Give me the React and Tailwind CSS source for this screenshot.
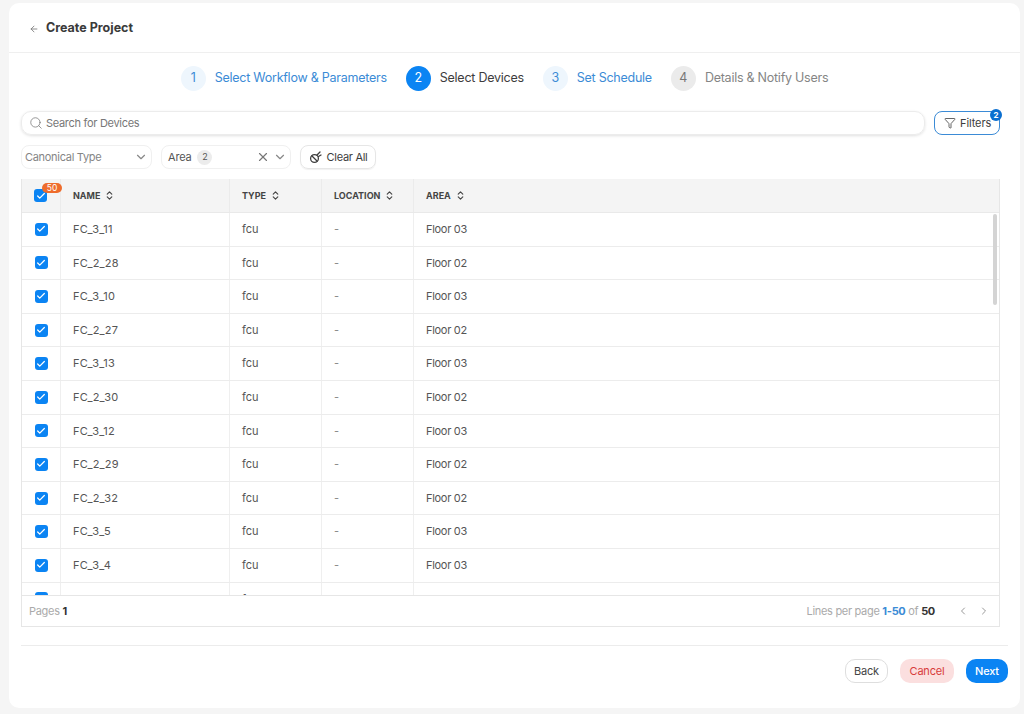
import React from 'react';
import { ArrowLeft, Search, ChevronDown, ChevronLeft, ChevronRight, X, Check, ChevronsUpDown, Funnel } from 'lucide-react';

const devices = [
  ['FC_3_11', 'Floor 03'],
  ['FC_2_28', 'Floor 02'],
  ['FC_3_10', 'Floor 03'],
  ['FC_2_27', 'Floor 02'],
  ['FC_3_13', 'Floor 03'],
  ['FC_2_30', 'Floor 02'],
  ['FC_3_12', 'Floor 03'],
  ['FC_2_29', 'Floor 02'],
  ['FC_2_32', 'Floor 02'],
  ['FC_3_5', 'Floor 03'],
  ['FC_3_4', 'Floor 03'],
  ['FC_2_31', 'Floor 02'],
];

const steps = [
  { n: 1, label: 'Select Workflow & Parameters', state: 'done' },
  { n: 2, label: 'Select Devices', state: 'active' },
  { n: 3, label: 'Set Schedule', state: 'done' },
  { n: 4, label: 'Details & Notify Users', state: 'todo' },
];

const Step = ({ step }) => {
  const circle = step.state === 'active' ? 'bg-[#0b84f3] text-white' : step.state === 'done' ? 'bg-[#eef6fd] text-[#3b8bd6]' : 'bg-[#ebebeb] text-[#777]';
  const text = step.state === 'active' ? 'text-[#3d3d3d]' : step.state === 'done' ? 'text-[#3b8bd6]' : 'text-[#858585]';
  return (
    <div className="flex items-center gap-[9px]">
      <div className={`w-[25px] h-[25px] rounded-full flex items-center justify-center text-[12.5px] ${circle}`}>{step.n}</div>
      <span className={`text-[12.5px] tracking-[-0.25px] whitespace-nowrap ${text}`}>{step.label}</span>
    </div>
  );
};

const Checkbox = () => (
  <div className="w-[13px] h-[13px] rounded-[3px] bg-[#0b84f3] flex items-center justify-center">
    <Check size={10} strokeWidth={3} className="text-white" />
  </div>
);

const HeadCell = ({ label }) => (
  <div className="flex items-center gap-[4px] pl-[12px] border-l border-[#ebebeb] h-full">
    <span className="text-[9px] font-bold text-[#444]">{label}</span>
    <ChevronsUpDown size={11} strokeWidth={2.5} className="text-[#444]" />
  </div>
);

const BroomIcon = () => (
  <svg width="13" height="13" viewBox="0 0 13 13" fill="none" stroke="#3d3d3d" strokeWidth="1.3" strokeLinecap="round">
    <circle cx="5.5" cy="7.5" r="3.9" />
    <path d="M3 5l5 5" />
    <path d="M8 4l3-3M9.5 5.5L12 4" />
  </svg>
);

export default function App() {
  return (
    <div className="w-[1024px] h-[714px] bg-[#f5f5f5] pt-[3px] pl-[9px] pr-[4px] pb-[6px] overflow-hidden font-['Inter',sans-serif]">
      <div className="h-full bg-white rounded-[10px] flex flex-col">
        <div className="h-[50px] flex items-center gap-[7px] pl-[20px] pt-[2px] border-b border-[#efefef] shrink-0">
          <ArrowLeft size={10} className="text-[#777]" />
          <span className="text-[12.5px] font-bold text-[#3a3a3a]">Create Project</span>
        </div>

        <div className="flex justify-center gap-[19px] pt-[13px] pr-[20px] shrink-0">
          {steps.map((s) => <Step key={s.n} step={s} />)}
        </div>

        <div className="flex gap-[9px] mt-[20px] pl-[12px] pr-[20px] shrink-0">
          <div className="flex-1 h-[24px] rounded-[10px] border border-[#ececec] shadow-[0_1px_3px_rgba(0,0,0,0.12)] flex items-center gap-[3px] pl-[7px]">
            <Search size={14} strokeWidth={1.3} className="text-[#777]" />
            <span className="text-[11px] tracking-[-0.3px] text-[#777]">Search for Devices</span>
          </div>
          <div className="relative w-[66px] h-[24px] rounded-[8px] border border-[#3b8bd6] flex items-center gap-[4px] pl-[9px]">
            <Funnel size={12} strokeWidth={1.6} className="text-[#3d3d3d]" />
            <span className="text-[11px] text-[#3d3d3d] tracking-[-0.1px]">Filters</span>
            <div className="absolute -top-[3px] -right-[3px] w-[12px] h-[12px] rounded-full bg-[#0b6fd0] text-white text-[8px] font-bold flex items-center justify-center">2</div>
          </div>
        </div>

        <div className="flex gap-[9px] mt-[10px] pl-[12px] shrink-0">
          <div className="w-[131px] h-[24px] rounded-[8px] border border-[#f0f0f0] flex items-center justify-between pl-[3px] pr-[3px]">
            <span className="text-[11px] tracking-[-0.3px] text-[#858585]">Canonical Type</span>
            <ChevronDown size={14} className="text-[#888]" />
          </div>
          <div className="w-[130px] h-[24px] rounded-[8px] border border-[#f0f0f0] flex items-center pl-[6px] pr-[3px]">
            <span className="text-[11px] tracking-[-0.2px] text-[#555]">Area</span>
            <span className="ml-[6px] w-[15px] h-[15px] rounded-full bg-[#ececec] text-[9px] text-[#555] flex items-center justify-center">2</span>
            <X size={14} className="ml-auto text-[#777]" />
            <ChevronDown size={14} className="ml-[3px] text-[#888]" />
          </div>
          <div className="w-[76px] h-[24px] rounded-[8px] border border-[#e6e6e6] shadow-[0_1px_1px_rgba(0,0,0,0.06)] flex items-center justify-center gap-[5px]">
            <BroomIcon />
            <span className="text-[11px] tracking-[-0.3px] text-[#3d3d3d]">Clear All</span>
          </div>
        </div>

        <div className="relative mt-[10px] ml-[12px] mr-[20px] border-x border-b border-[#e6e6e6] shrink-0">
          <div className="grid grid-cols-[38px_169px_92px_92px_1fr] h-[34px] bg-[#f4f4f4] items-center border-b border-[#e9e9e9]">
            <div className="relative flex items-center justify-center h-full -ml-[1px]">
              <Checkbox />
              <span className="absolute top-[4px] left-[21px] w-[20px] h-[10px] rounded-full bg-[#ee6c2c] text-white text-[8.5px] leading-[10px] text-center">50</span>
            </div>
            <HeadCell label="NAME" />
            <HeadCell label="TYPE" />
            <HeadCell label="LOCATION" />
            <HeadCell label="AREA" />
          </div>
          <div className="h-[382px] overflow-hidden">
            {devices.map(([name, area]) => (
              <div key={name} className="grid grid-cols-[38px_169px_92px_92px_1fr] h-[33.6px] shrink-0 border-b border-[#ececec] text-[11px] text-[#555]">
                <div className="flex items-center justify-center"><Checkbox /></div>
                <div className="flex items-center pl-[12px] border-l border-[#efefef] tracking-[0.2px]">{name}</div>
                <div className="flex items-center pl-[12px] border-l border-[#efefef]">fcu</div>
                <div className="flex items-center pl-[12px] border-l border-[#efefef] text-[#888]">-</div>
                <div className="flex items-center pl-[12px] border-l border-[#efefef] tracking-[-0.3px]">{area}</div>
              </div>
            ))}
          </div>
          <div className="absolute top-[35px] right-[2px] w-[4px] h-[91px] rounded-full bg-[#d4d4d4]" />
          <div className="h-[31px] border-t border-[#e6e6e6] flex items-center justify-between pl-[7px] pr-[9px] text-[11px] tracking-[-0.3px] text-[#aaa]">
            <span>Pages <b className="text-[#333]">1</b></span>
            <div className="flex items-center">
              <span>Lines per page <b className="text-[#3b8bd6]">1-50</b> of <b className="text-[#333]">50</b></span>
              <ChevronLeft size={12} className="ml-[22px] text-[#999]" />
              <ChevronRight size={12} className="ml-[9px] text-[#999]" />
            </div>
          </div>
        </div>

        <div className="mt-[18px] ml-[12px] mr-[12px] border-t border-[#ececec] pt-[13px] flex justify-end gap-[12px] shrink-0">
          <div className="w-[43px] h-[24px] rounded-[10px] border border-[#dedede] text-[#444] text-[11px] tracking-[-0.2px] flex items-center justify-center">Back</div>
          <div className="w-[54px] h-[24px] rounded-[10px] bg-[#fbdfdf] text-[#d83c3c] text-[11px] tracking-[-0.2px] flex items-center justify-center">Cancel</div>
          <div className="w-[42px] h-[24px] rounded-[10px] bg-[#0b84f3] text-white text-[11px] font-medium tracking-[-0.2px] flex items-center justify-center">Next</div>
        </div>
      </div>
    </div>
  );
}
